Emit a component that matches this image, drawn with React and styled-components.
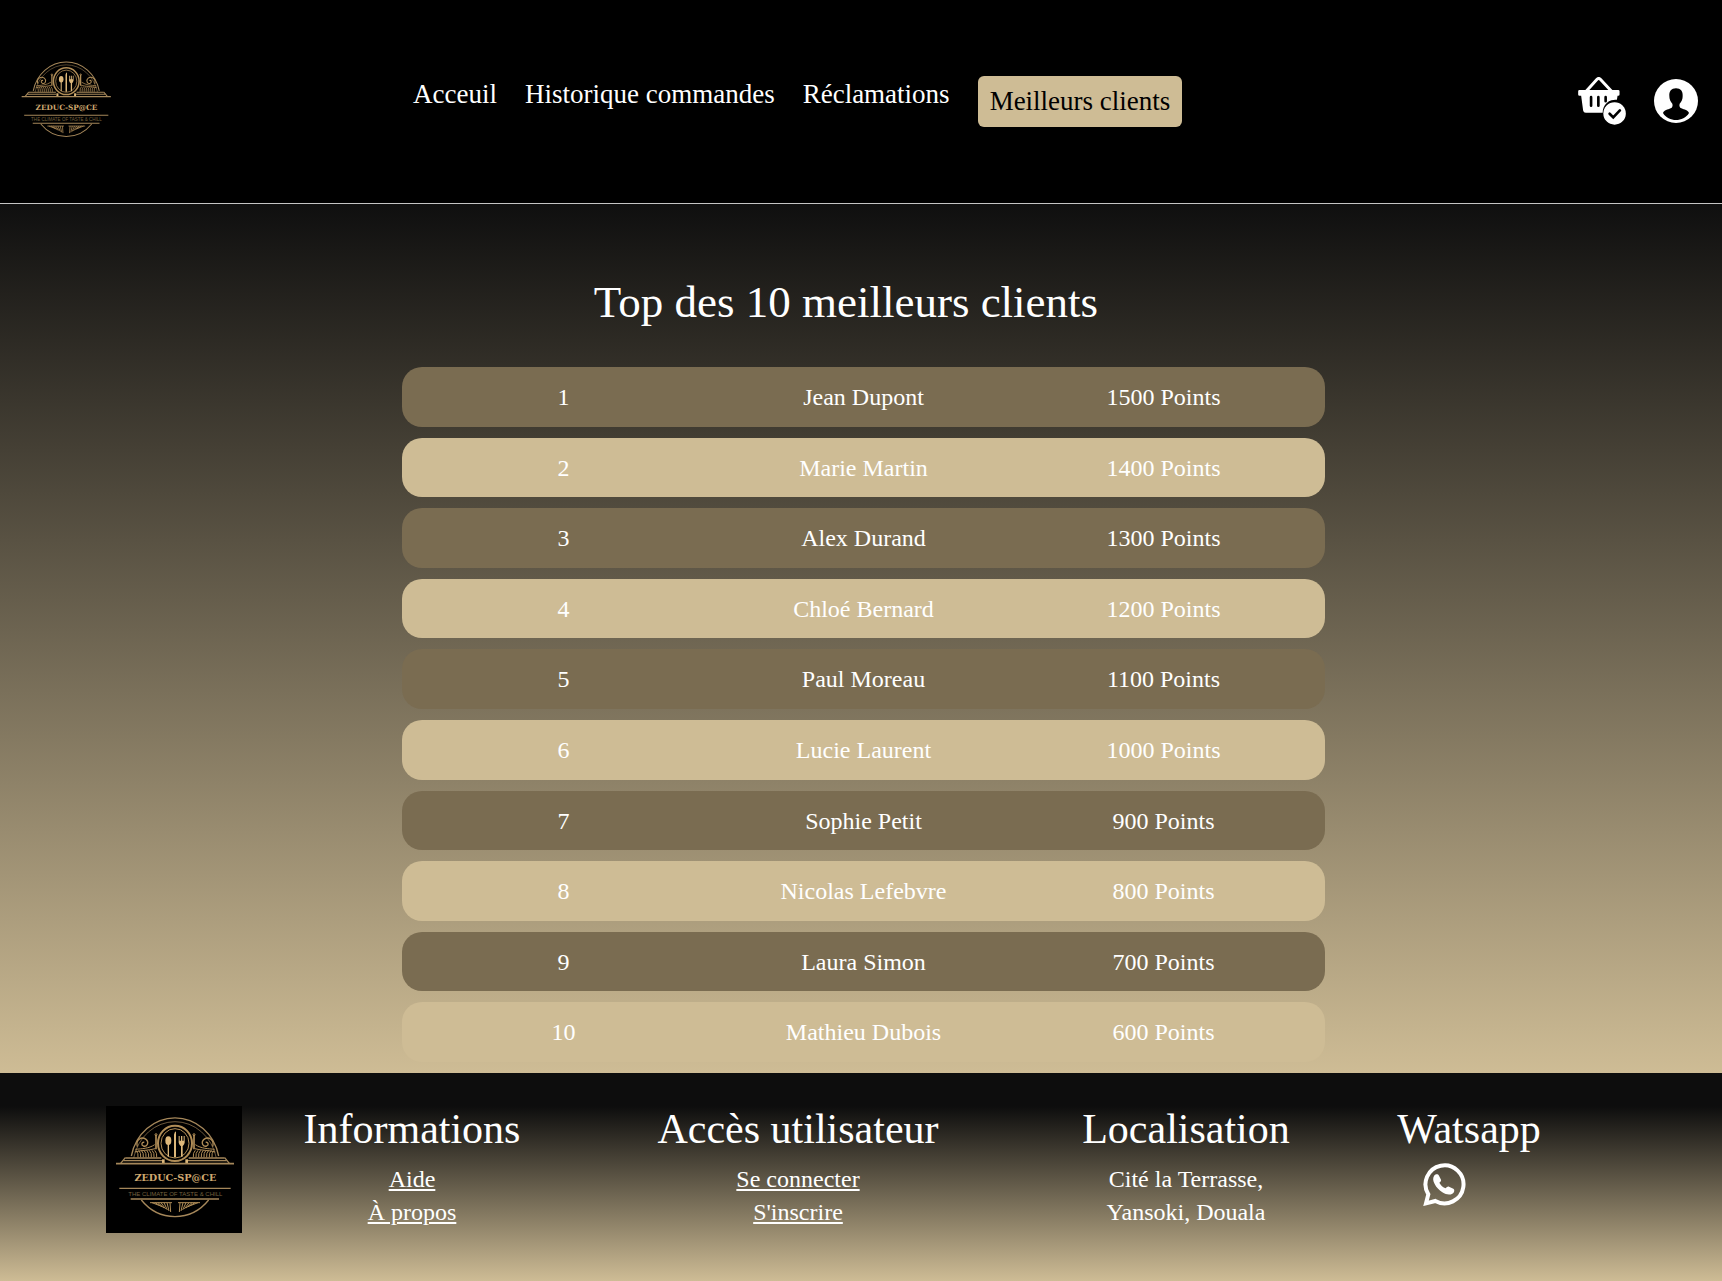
import React from "react";
import styled, { createGlobalStyle } from "styled-components";

const GlobalStyle = createGlobalStyle`
  *, *::before, *::after { box-sizing: border-box; }
  body {
    margin: 0;
    background: #cebc95;
    color: #fff;
    font-family: "Liberation Serif", "Times New Roman", serif;
    font-size: 24px;
    line-height: 1.4;
  }
`;

const Page = styled.div`
  display: flex;
  flex-direction: column;
  min-height: 100vh;
`;

const Header = styled.header`
  display: flex;
  align-items: center;
  justify-content: space-between;
  padding: 53px 24px 54px 14px;
  background: #000;
  border-bottom: 1px solid #c4c4c4;
`;

const HeaderSide = styled.div`
  display: flex;
  flex: 0 0 auto;
  align-items: center;
  gap: 28px;
`;

const Nav = styled.nav`
  display: flex;
  flex: 1;
  align-items: flex-start;
  gap: 28px;
  padding-left: 296px;
  font-size: 27px;
  line-height: 37px;
`;

const NavLink = styled.a`
  color: ${(p) => (p.$active ? "#000" : "#fff")};
  background: ${(p) => (p.$active ? "#cebc95" : "transparent")};
  padding: ${(p) => (p.$active ? "7px 12px" : "0")};
  border-radius: 6px;
  text-decoration: none;
  white-space: nowrap;
`;

const IconButton = styled.button`
  display: block;
  padding: 0;
  border: 0;
  background: none;
  color: #fff;
  cursor: pointer;
  svg { display: block; }
`;

const Main = styled.main`
  display: flex;
  flex-direction: column;
  align-items: center;
  padding: 66px 0 0;
  background: linear-gradient(#0f0f0f, #cebc95);
`;

const Title = styled.h1`
  margin: 0 30px 22px 0;
  font-size: 45px;
  font-weight: 400;
  line-height: 64px;
`;

const Ranking = styled.table`
  width: 54%;
  max-width: 923px;
  margin-left: 5px;
  table-layout: fixed;
  border-collapse: separate;
  border-spacing: 0 11px;
`;

const Row = styled.tr`
  td {
    background: ${(p) => (p.$light ? "#cebc95" : "#7a6c51")};
  }
`;

const Cell = styled.td`
  width: ${(p) => p.$width};
  padding: 14px 0 12px;
  text-align: center;
  &:first-child { border-radius: 20px 0 0 20px; }
  &:last-child { border-radius: 0 20px 20px 0; }
`;

const Footer = styled.footer`
  display: grid;
  grid-template-columns: 136px 340fr 432fr 344fr 222fr;
  flex: 1;
  align-items: start;
  padding: 33px 142px 48px 106px;
  background: linear-gradient(#0d0d0d 16%, #cebc95);
  line-height: 33px;
`;

const FooterColumn = styled.section`
  display: flex;
  flex-direction: column;
  align-items: center;
  text-align: center;
`;

const FooterTitle = styled.h2`
  margin: 0 0 11px;
  font-size: 42px;
  font-weight: 400;
  line-height: 46px;
`;

const FooterLink = styled.a`
  color: #fff;
  text-decoration: underline;
`;

const Address = styled.address`
  font-style: normal;
`;

const WhatsappLink = styled.a`
  display: block;
  margin-right: 50px;
  color: #fff;
  svg { display: block; }
`;

const LogoSvg = styled.svg`
  display: block;
  background: #000;
`;

const HATCH = [0, 1, 2, 3, 4, 5, 6, 7];

function LogoHalf() {
  return (
    <g fill="none" stroke="#b08d57" strokeWidth="3">
      <path d="M112 140c-6-20 12-32 26-22c10 9 4 24-8 20c-8-4-4-13 3-11" strokeWidth="4" />
      <path d="M106 148c20-2 40-2 58-14M104 156c20-6 40-4 62-10" />
      <path d="M168 104v44" strokeWidth="5" />
      <circle cx="168" cy="104" r="3" />
      {HATCH.map((i) => (
        <path key={i} d={`M${108 + i * 8} 151q8 8 6 21`} />
      ))}
      <path d="M150 308h66" />
      {HATCH.slice(0, 7).map((i) => (
        <path key={i} d={`M${156 + i * 9} 308L${182 + i * 5} ${318 + i * 3}`} />
      ))}
      <path d="M190 178v12" strokeWidth="8" stroke="#dcb77a" />
    </g>
  );
}

function Logo({ width, height }) {
  return (
    <LogoSvg width={width} height={height} viewBox="18 18 408 381" role="img" aria-label="Zeduc-Sp@ce">
      <g fill="none" stroke="#a5875a" strokeWidth="4">
        <path d="M94 168A134 145 0 0 1 356 168" />
        <path d="M101 174A127 139 0 0 1 349 174" strokeWidth="2" />
        <path d="M124 300A134 145 0 0 0 326 300" />
      </g>
      <LogoHalf />
      <g transform="translate(450 0) scale(-1 1)">
        <LogoHalf />
      </g>
      <ellipse cx="225" cy="130" rx="51" ry="53" fill="#000" stroke="#b08d57" strokeWidth="6" />
      <ellipse cx="225" cy="130" rx="42" ry="44" fill="none" stroke="#b08d57" strokeWidth="3" />
      <g fill="#dcb77a">
        <ellipse cx="205" cy="122" rx="9" ry="13" />
        <path d="M203 130h4v40h-4zM222 172V104q1-8 6-10v78zM243 135h5v35h-5z" />
        <path d="M236 108h3v14h4v-14h4v14h4v-14h3v20q-3 10-9 10t-9-10z" />
      </g>
      <g fill="none" stroke="#a5875a">
        <path d="M76 174h108M266 174h108M70 182h116M264 182h116" strokeWidth="4" />
        <path d="M76 173l-14 17M374 173l14 17" strokeWidth="4" />
        <path d="M48 191h354" strokeWidth="5" />
        <path d="M58 265h334M92 297h265" strokeWidth="4" />
      </g>
      <text x="226" y="243" textAnchor="middle" fill="#cfa970" fontFamily="DejaVu Serif, serif" fontWeight="700" fontSize="29">
        ZEDUC-SP@CE
      </text>
      <text x="226" y="289" textAnchor="middle" fill="#75603f" fontFamily="Liberation Sans, sans-serif" fontSize="18">
        THE CLIMATE OF TASTE &amp; CHILL
      </text>
    </LogoSvg>
  );
}

function BasketIcon() {
  return (
    <svg width="48" height="48" viewBox="55 51 144 145" aria-hidden="true">
      <path d="M80 93L112 58q5-5 10 0L155 93" fill="none" stroke="#fff" strokeWidth="9" />
      <path
        fill="#fff"
        d="M59 90h117q4 0 4 4v10q0 4-4 4h-2l-2 12a38 38 0 0 0-43 39H78q-7 0-8-7l-6-44h-5q-4 0-4-4V94q0-4 4-4z"
      />
      <path d="M94 112v26M116 112v26M138 112v12" stroke="#000" strokeWidth="8" strokeLinecap="round" />
      <circle cx="165" cy="161" r="34" fill="#fff" />
      <path d="M150 162l11 11 20-21" fill="none" stroke="#000" strokeWidth="8" strokeLinecap="round" />
    </svg>
  );
}

function ProfileIcon() {
  return (
    <svg width="44" height="44" viewBox="282 57 132 132" aria-hidden="true">
      <circle cx="348" cy="123" r="66" fill="#fff" />
      <path
        fill="#000"
        d="M348 85c-14 0-21 9-20 23c0 9 3 17 9 23c2 6 0 12-5 14c-9 4-20 6-23 14c8 14 24 21 39 21s31-7 39-21c-3-8-14-10-23-14c-5-2-7-8-5-14c6-6 9-14 9-23c1-14-6-23-20-23z"
      />
    </svg>
  );
}

function WhatsappIcon() {
  return (
    <svg width="43" height="43" viewBox="23 25 129 129" aria-hidden="true">
      <path
        d="M39 119A57 57 0 1 1 60 139L32 146Z"
        fill="none"
        stroke="currentColor"
        strokeWidth="12"
        strokeLinejoin="miter"
      />
      <path
        fill="currentColor"
        d="M56 64c3-6 12-7 15-1l6 12c1 3-1 6-5 9c4 8 11 14 19 17c4-5 7-7 10-5l13 6c5 3 3 12-3 15c-8 5-19 3-30-4c-10-7-18-15-23-25c-5-9-6-17-2-24z"
      />
    </svg>
  );
}

const NAV_ITEMS = ["Acceuil", "Historique commandes", "Réclamations", "Meilleurs clients"];

const CLIENTS = [
  ["Jean Dupont", 1500],
  ["Marie Martin", 1400],
  ["Alex Durand", 1300],
  ["Chloé Bernard", 1200],
  ["Paul Moreau", 1100],
  ["Lucie Laurent", 1000],
  ["Sophie Petit", 900],
  ["Nicolas Lefebvre", 800],
  ["Laura Simon", 700],
  ["Mathieu Dubois", 600],
];

export default function App() {
  return (
    <Page>
      <GlobalStyle />
      <Header>
        <HeaderSide>
          <Logo width={103} height={96} />
        </HeaderSide>
        <Nav>
          {NAV_ITEMS.map((item, i) => (
            <NavLink key={item} href="#" $active={i === 3}>
              {item}
            </NavLink>
          ))}
        </Nav>
        <HeaderSide>
          <IconButton type="button" aria-label="Panier">
            <BasketIcon />
          </IconButton>
          <IconButton type="button" aria-label="Profil">
            <ProfileIcon />
          </IconButton>
        </HeaderSide>
      </Header>

      <Main>
        <Title>Top des 10 meilleurs clients</Title>
        <Ranking>
          <tbody>
            {CLIENTS.map(([name, points], i) => (
              <Row key={name} $light={i % 2 === 1}>
                <Cell $width="35%">{i + 1}</Cell>
                <Cell $width="30%">{name}</Cell>
                <Cell $width="35%">{points} Points</Cell>
              </Row>
            ))}
          </tbody>
        </Ranking>
      </Main>

      <Footer>
        <Logo width={136} height={127} />
        <FooterColumn>
          <FooterTitle>Informations</FooterTitle>
          <FooterLink href="#">Aide</FooterLink>
          <FooterLink href="#">À propos</FooterLink>
        </FooterColumn>
        <FooterColumn>
          <FooterTitle>Accès utilisateur</FooterTitle>
          <FooterLink href="#">Se connecter</FooterLink>
          <FooterLink href="#">S'inscrire</FooterLink>
        </FooterColumn>
        <FooterColumn>
          <FooterTitle>Localisation</FooterTitle>
          <Address>
            Cité la Terrasse,
            <br />
            Yansoki, Douala
          </Address>
        </FooterColumn>
        <FooterColumn>
          <FooterTitle>Watsapp</FooterTitle>
          <WhatsappLink href="#" aria-label="Watsapp">
            <WhatsappIcon />
          </WhatsappLink>
        </FooterColumn>
      </Footer>
    </Page>
  );
}
